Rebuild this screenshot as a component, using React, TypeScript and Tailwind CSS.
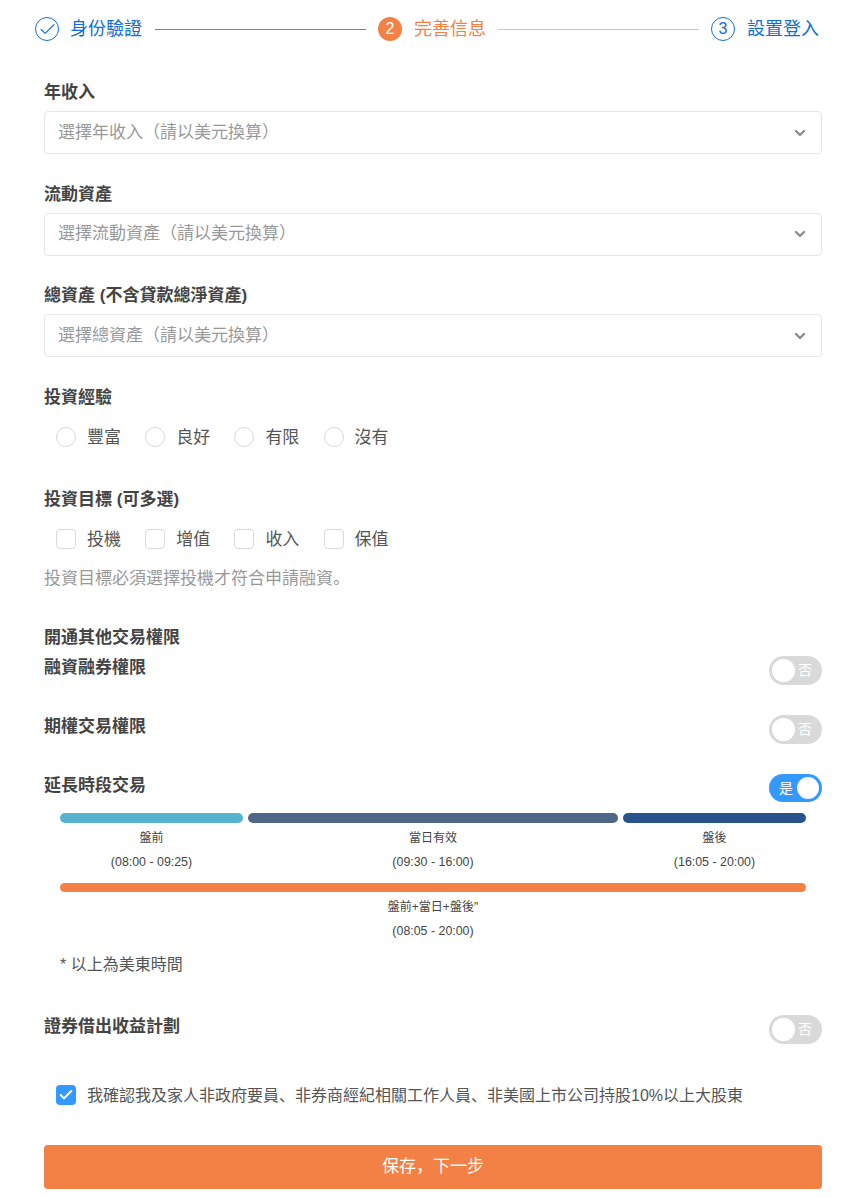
import { Check, ChevronDown } from "lucide-react";

const FONT = "font-['Liberation_Sans','Noto_Sans_CJK_SC',sans-serif]";

function FieldLabel({ children }: { children: React.ReactNode }) {
  return <div className="h-6 pt-px text-[17px] leading-6 font-bold text-[#444]">{children}</div>;
}

function SelectField({ label, placeholder }: { label: string; placeholder: string }) {
  return (
    <div className="mb-[27.5px]">
      <FieldLabel>{label}</FieldLabel>
      <div className="mt-[7px] flex h-[43px] items-center justify-between rounded border border-[#e5e5e5] bg-white px-[13px] text-[17px] text-[#999]">
        <span>{placeholder}</span>
        <ChevronDown className="h-4 w-4 text-[#8c8c8c]" strokeWidth={3.5} />
      </div>
    </div>
  );
}

function OptionRow({ items, square }: { items: string[]; square?: boolean }) {
  return (
    <div className="flex h-[22px] pl-3">
      {items.map((item) => (
        <div key={item} className="mr-[24.2px] flex items-center gap-[11px] text-[17px] text-[#555]">
          <span
            className={
              square
                ? "h-5 w-5 rounded border border-[#d9d9d9] bg-white"
                : "h-5 w-5 rounded-full border border-[#d9d9d9] bg-white"
            }
          />
          <span className="w-[34px] pt-[2px] whitespace-nowrap">{item}</span>
        </div>
      ))}
    </div>
  );
}

function Toggle({ on }: { on?: boolean }) {
  if (on) {
    return (
      <div className="flex h-[28px] w-[53px] items-center justify-between rounded-full bg-[#3399ff] pr-[3px] pl-[10px] text-sm text-white">
        <span>是</span>
        <span className="h-[22px] w-[22px] rounded-full bg-white" />
      </div>
    );
  }
  return (
    <div className="flex h-[29px] w-[53px] items-center justify-between rounded-full bg-[#d9d9d9] pr-[10px] pl-[3px] text-sm text-white">
      <span className="h-[23px] w-[23px] rounded-full bg-white" />
      <span>否</span>
    </div>
  );
}

function PermissionRow({ label, on }: { label: string; on?: boolean }) {
  return (
    <div className="flex items-start justify-between">
      <div className="text-[17px] leading-6 font-bold text-[#444]">{label}</div>
      <Toggle on={on} />
    </div>
  );
}

function Session({
  name,
  time,
  color,
  className,
  bar = "h-[10px]",
}: {
  name: string;
  time: string;
  color: string;
  className: string;
  bar?: string;
}) {
  return (
    <div className={className}>
      <div className={`${bar} rounded-full ${color}`} />
      <div className="mt-[3px] text-center text-xs leading-6 text-[#444]">{name}</div>
      <div className="text-center text-[12.4px] leading-6 text-[#444]">{time}</div>
    </div>
  );
}

export default function App() {
  return (
    <div className={`${FONT} min-h-[1197px] w-[858px] bg-white px-[36px]`}>
      {/* Steps */}
      <div className="flex h-[58px] items-center text-lg">
        <span className="-ml-px flex h-6 w-6 items-center justify-center rounded-full border border-[#0f6fd6] text-[#0f6fd6]">
          <Check className="h-[19px] w-[19px]" strokeWidth={1.4} />
        </span>
        <span className="ml-[11px] w-[73px] text-[#0f6fd6]">身份驗證</span>
        <span className="ml-3 h-px w-[211px] bg-[#3d8ee6]" />
        <span className="ml-3 flex h-6 w-6 items-center justify-center rounded-full bg-[#f38145] text-base text-white">2</span>
        <span className="ml-3 w-[72px] text-[#f38145]">完善信息</span>
        <span className="ml-3 h-px w-[201px] bg-[#c8c8c8]" />
        <span className="ml-3 flex h-6 w-6 items-center justify-center rounded-full border border-[#0f6fd6] text-base text-[#0f6fd6]">3</span>
        <span className="ml-3 whitespace-nowrap text-[#0f6fd6]">設置登入</span>
      </div>

      <div className="ml-2 w-[778px] pt-[22px]">
        <SelectField label="年收入" placeholder="選擇年收入（請以美元換算）" />
        <SelectField label="流動資產" placeholder="選擇流動資產（請以美元換算）" />
        <SelectField label="總資產 (不含貸款總淨資產)" placeholder="選擇總資產（請以美元換算）" />

        <FieldLabel>投資經驗</FieldLabel>
        <div className="mt-[17px]">
          <OptionRow items={["豐富", "良好", "有限", "沒有"]} />
        </div>

        <div className="mt-[39px]">
          <FieldLabel>投資目標 (可多選)</FieldLabel>
        </div>
        <div className="mt-[17px]">
          <OptionRow square items={["投機", "增值", "收入", "保值"]} />
        </div>
        <div className="mt-[17px] text-[17px] leading-6 text-[#999]">投資目標必須選擇投機才符合申請融資。</div>

        <div className="mt-[35px] text-[17px] leading-6 font-bold text-[#444]">開通其他交易權限</div>
        <div className="mt-[6px]">
          <PermissionRow label="融資融券權限" />
        </div>
        <div className="mt-[30px]">
          <PermissionRow label="期權交易權限" />
        </div>
        <div className="mt-[30px]">
          <PermissionRow label="延長時段交易" on />
        </div>

        {/* Session bars */}
        <div className="mt-[11px] px-4">
          <div className="flex gap-[5px]">
            <Session className="w-[183px]" color="bg-[#56b3cf]" name="盤前" time="(08:00 - 09:25)" />
            <Session className="w-[370px]" color="bg-[#4f6786]" name="當日有效" time="(09:30 - 16:00)" />
            <Session className="w-[183px]" color="bg-[#2a528c]" name="盤後" time="(16:05 - 20:00)" />
          </div>
          <div className="mt-[9px]">
            <Session className="w-[746px]" bar="h-[9px]" color="bg-[#f38145]" name={'盤前+當日+盤後"'} time="(08:05 - 20:00)" />
          </div>
          <div className="mt-[10px] text-base leading-6 text-[#555]">* 以上為美東時間</div>
        </div>

        <div className="mt-[38px]">
          <PermissionRow label="證券借出收益計劃" />
        </div>

        <div className="mt-[41px] flex h-5 items-center gap-[11px] pl-3 text-base text-[#555]">
          <span className="flex h-5 w-5 items-center justify-center rounded bg-[#3399ff] text-white">
            <Check className="h-4 w-4" strokeWidth={3} />
          </span>
          <span className="pt-[2px]">我確認我及家人非政府要員、非券商經紀相關工作人員、非美國上市公司持股10%以上大股東</span>
        </div>

        <button className="mt-10 h-11 w-full rounded bg-[#f38145] pt-px text-[17px] text-white">保存，下一步</button>
      </div>
    </div>
  );
}
